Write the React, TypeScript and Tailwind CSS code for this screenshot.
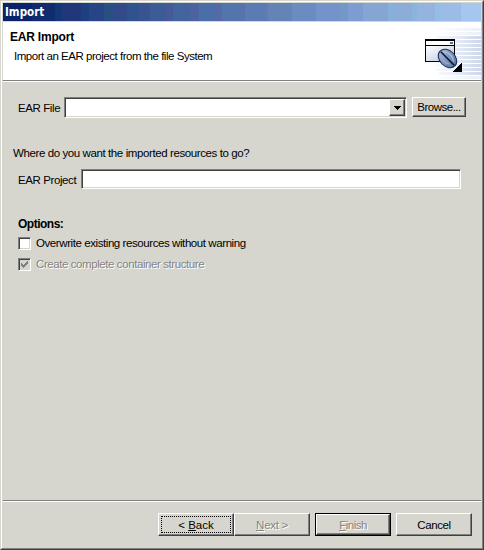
import React from "react";

const raised =
  "border border-t-white border-l-white border-r-[#404040] border-b-[#404040] shadow-[inset_-1px_-1px_0_#808080]";
const sunken =
  "border border-t-[#808080] border-l-[#808080] border-r-white border-b-white bg-white shadow-[inset_1px_1px_0_#404040,inset_-1px_-1px_0_#d6d6ce]";
const etched = "text-[#848484] [text-shadow:1px_1px_0_#fff]";

const titleBands: [number, string][] = [
  [29, "#0a246a"],
  [23, "#112c6e"],
  [7, "#123878"],
  [19, "#20377a"],
  [8, "#1c4080"],
  [15, "#274585"],
  [10, "#284f82"],
  [13, "#32498a"],
  [12, "#2f538e"],
  [11, "#3a5492"],
  [16, "#3c5c98"],
  [7, "#465a9a"],
  [17, "#42659e"],
  [9, "#4b639e"],
  [16, "#4c6ea8"],
  [7, "#566ba6"],
  [20, "#5276ac"],
  [3, "#5c70ac"],
  [20, "#5a7cb2"],
  [3, "#637ab4"],
  [24, "#6484b6"],
  [24, "#6b8cc0"],
  [24, "#7393ca"],
  [8, "#7298c8"],
  [15, "#7c9cd2"],
  [25, "#85a5d2"],
  [5, "#86b0dc"],
  [19, "#8badd8"],
  [5, "#8ab4e0"],
  [18, "#94b4df"],
  [7, "#94bee8"],
  [19, "#9bbce6"],
  [20, "#a4c6ef"],
];

function TitleBar() {
  return (
    <div className="relative h-[18px] shrink-0 overflow-hidden">
      <div className="flex h-full">
        {titleBands.map(([w, c], i) => (
          <div key={i} className="h-full shrink-0" style={{ width: w, background: c }} />
        ))}
      </div>
      <div className="absolute top-0 left-[2px] font-['DejaVu_Sans_Condensed','DejaVu_Sans',sans-serif] text-[11.5px] leading-[18px] font-bold text-white">
        Import
      </div>
    </div>
  );
}

function HeaderArt() {
  return (
    <svg width="60" height="58" viewBox="421 22 60 58" shapeRendering="crispEdges" className="shrink-0">
      <defs>
        <linearGradient id="fade" gradientUnits="userSpaceOnUse" x1="426" x2="481" y1="0" y2="0">
          <stop offset="0" stopColor="#fff" />
          <stop offset="0.5" stopColor="#eaeff8" />
          <stop offset="1" stopColor="#ccd6ea" />
        </linearGradient>
        <linearGradient id="pane" x1="0" x2="1" y2="1">
          <stop offset="0" stopColor="#fff" />
          <stop offset="1" stopColor="#b9c6df" />
        </linearGradient>
        <linearGradient id="bean" x1="0" x2="1" y2="0">
          <stop offset="0" stopColor="#a3b7d8" />
          <stop offset="1" stopColor="#58749f" />
        </linearGradient>
      </defs>
      {[28, 32, 36, 40, 44, 48, 52, 56, 60, 64, 68, 72, 76].map((y, i) => {
        const x = 426 + Math.abs(i - 6) * 2.5;
        return <rect key={y} x={x} y={y} width={481 - x} height="3" fill="url(#fade)" opacity={i < 2 || i > 11 ? 0.4 : 1} />;
      })}
      <rect x="425" y="39" width="30" height="23" fill="#000" />
      <rect x="426" y="41" width="28" height="4" fill="#fff" />
      <rect x="450" y="42" width="3" height="2" fill="#5d7099" />
      <rect x="426" y="46" width="28" height="15" fill="url(#pane)" />
      <g shapeRendering="auto" transform="rotate(45 447.5 58.5)">
        <ellipse cx="447.5" cy="58.5" rx="10.5" ry="7.8" fill="url(#bean)" stroke="#1a2b52" />
        <path d="M438 58.5h19" stroke="#081330" strokeWidth="1.5" />
        <path d="M440 56.5q7 -5 14 0" fill="none" stroke="#b4c5e2" />
        <path d="M441 61q6 4 12 0" fill="none" stroke="#9db2d4" />
      </g>
      <path d="M462 62v10h-10z" fill="#000" />
    </svg>
  );
}

function Button({ className = "", children }: { className?: string; children: React.ReactNode }) {
  return (
    <button className={`flex h-[23px] w-[76px] shrink-0 items-center justify-center ${raised} ${className}`}>
      {children}
    </button>
  );
}

export default function App() {
  return (
    <div className="h-[550px] w-[484px] border border-t-[#d6d6ce] border-r-[#404040] border-b-[#404040] border-l-[#d6d6ce] bg-[#d6d6ce] font-['Liberation_Sans',Arial,sans-serif] text-[11.5px] leading-[14px] text-black">
      <div className="flex h-full flex-col border border-t-white border-r-[#808080] border-b-[#808080] border-l-white pt-px pr-px pl-px">
        <TitleBar />
        <header className="mt-px flex h-[60px] shrink-0 justify-between border-b border-b-white bg-white shadow-[inset_0_-1px_0_#808080]">
          <div className="pt-2 pl-[7px]">
            <h1 className="text-[12px] leading-[14px] font-bold tracking-[-0.2px] whitespace-nowrap">EAR Import</h1>
            <p className="mt-[5px] pl-1 tracking-[-0.47px] whitespace-nowrap">Import an EAR project from the file System</p>
          </div>
          <HeaderArt />
        </header>

        <main className="flex flex-1 flex-col pt-[15px]">
          <div className="flex h-[21px]">
            <label className="w-[61px] pt-1 pl-[15px] tracking-[-0.4px] whitespace-nowrap">EAR File</label>
            <div className={`flex h-[21px] w-[343px] justify-end p-px ${sunken}`}>
              <button className={`flex h-[17px] w-4 items-center justify-center bg-[#d6d6ce] ${raised}`}>
                <svg width="7" height="4" shapeRendering="crispEdges">
                  <path d="M0 0h7v1h-1v1h-1v1h-1v1h-1v-1h-1v-1h-1v-1h-1z" />
                </svg>
              </button>
            </div>
            <Button className="ml-[5px] h-5! w-[54px]! tracking-[-0.5px]">Browse...</Button>
          </div>
          <p className="mt-[28px] pl-[10px] tracking-[-0.4px] whitespace-nowrap">
            Where do you want the imported resources to go?
          </p>
          <div className="mt-[9px] flex h-5">
            <label className="w-[78px] pt-1 pl-[15px] tracking-[-0.4px] whitespace-nowrap">EAR Project</label>
            <div className={`h-5 w-[380px] ${sunken}`} />
          </div>
          <section className="mt-[28px] pl-[15px]">
            <h2 className="text-[12px] leading-[14px] font-bold tracking-[-0.5px]">Options:</h2>
            <label className="mt-[5px] flex h-[14px] items-center">
              <span className={`mr-[5px] h-[13px] w-[13px] ${sunken}`} />
              <span className="tracking-[-0.42px] whitespace-nowrap">Overwrite existing resources without warning</span>
            </label>
            <label className="mt-[7px] flex h-[14px] items-center">
              <span className={`mr-[5px] h-[13px] w-[13px] p-[2px] ${sunken} bg-[#d6d6ce]!`}>
                <svg width="7" height="7" shapeRendering="crispEdges" fill="#808080">
                  <path d="M0 2h1v1h1v1h1v-1h1v-1h1v-1h1v-1h1v3h-1v1h-1v1h-1v1h-1v1h-1v-1h-1v-1h-1z" />
                </svg>
              </span>
              <span className={`tracking-[-0.42px] whitespace-nowrap ${etched}`}>
                Create complete container structure
              </span>
            </label>
          </section>
        </main>

        <footer className="flex h-[48px] shrink-0 border-t border-t-[#808080] pt-[12px] pl-[155px] shadow-[inset_0_1px_0_#fff]">
          <Button className="relative">
            <span className="absolute inset-[2px] border border-dotted border-black" />
            <span>&lt; <u>B</u>ack</span>
          </Button>
          <Button className={`tracking-[-0.3px] ${etched}`}>
            <span><u>N</u>ext &gt;</span>
          </Button>
          <div className="ml-[5px] h-[23px] w-[76px] border border-black">
            <Button className={`h-[21px]! w-[74px]! tracking-[-0.5px] ${etched}`}>
              <span><u>F</u>inish</span>
            </Button>
          </div>
          <Button className="ml-[5px] tracking-[-0.4px]">Cancel</Button>
        </footer>
      </div>
    </div>
  );
}
